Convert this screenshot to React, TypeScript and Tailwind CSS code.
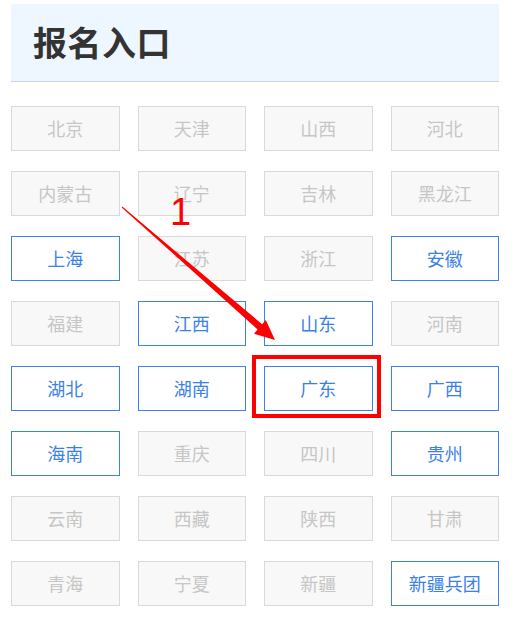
import React from "react";

const items: [string, boolean][] = [
  ["北京", false], ["天津", false], ["山西", false], ["河北", false],
  ["内蒙古", false], ["辽宁", false], ["吉林", false], ["黑龙江", false],
  ["上海", true], ["江苏", false], ["浙江", false], ["安徽", true],
  ["福建", false], ["江西", true], ["山东", true], ["河南", false],
  ["湖北", true], ["湖南", true], ["广东", true], ["广西", true],
  ["海南", true], ["重庆", false], ["四川", false], ["贵州", true],
  ["云南", false], ["西藏", false], ["陕西", false], ["甘肃", false],
  ["青海", false], ["宁夏", false], ["新疆", false], ["新疆兵团", true],
];

export default function App() {
  return (
    <div
      className="relative w-[515px] h-[623px] bg-white overflow-hidden"
      style={{ fontFamily: '"Microsoft YaHei", "Noto Sans CJK SC", "Noto Sans", sans-serif' }}
    >
      <div className="ml-[11px] pt-[4px] w-[488px]">
        <div className="h-[78px] bg-[#eef6ff] border-b border-[#c3d8ee] flex items-center pl-[22px]">
          <h1 className="text-[34px] font-bold text-[#333333] leading-none tracking-[0.5px] -mt-[2px]">报名入口</h1>
        </div>
        <div className="mt-[24px] grid grid-cols-4 gap-x-[18px] gap-y-[20px]">
          {items.map(([name, active]) => (
            <div
              key={name}
              className={
                active
                  ? "h-[45px] flex items-center justify-center border border-[#3b82f0] bg-white text-[#3b7fe9] text-[18px] leading-none"
                  : "h-[45px] flex items-center justify-center border border-[#d9d9d9] bg-[#f8f8f8] text-[#c6c6c6] text-[18px] leading-none"
              }
            >
              <span className="-mt-[2px]">{name}</span>
            </div>
          ))}
        </div>
      </div>

      {/* annotation: red box */}
      <div className="absolute left-[252px] top-[355px] w-[129px] h-[63px] border-[4px] border-[#ff0000] pointer-events-none" />

      {/* annotation: number */}
      <div
        className="absolute left-[170px] top-[193px] text-[38px] leading-none text-[#ff0000]"
        style={{ fontFamily: '"Liberation Sans", Arial, sans-serif' }}
      >
        1
      </div>

      {/* annotation: arrow */}
      <svg className="absolute left-0 top-0 pointer-events-none" width="515" height="623" viewBox="0 0 515 623">
        <polygon
          points="121.7,207.4 122.3,206.6 262.2,324.3 265.8,320.1 275,340 254,333.7 257.6,329.5"
          fill="#ff0000"
        />
      </svg>
    </div>
  );
}
